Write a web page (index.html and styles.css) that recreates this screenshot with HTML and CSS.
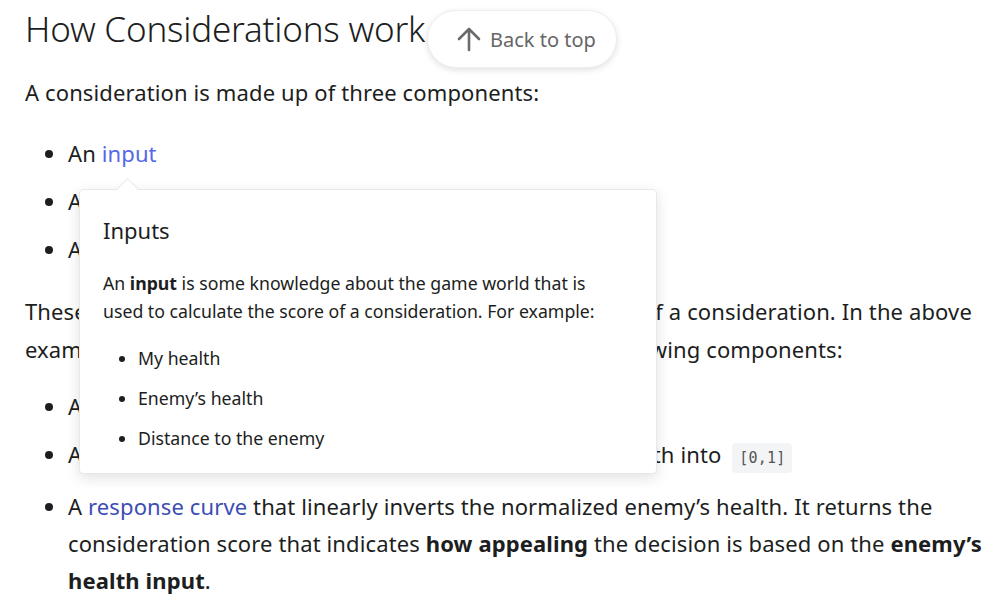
FILE: index.html
```html
<!DOCTYPE html>
<html lang="en">
<head>
<meta charset="utf-8">
<title>How Considerations work</title>
<link rel="stylesheet" href="styles.css">
</head>
<body>
<main class="doc">
  <h2 class="title">How Considerations work</h2>
  <p class="intro">A consideration is made up of three components:</p>
  <ul class="list">
    <li>An <a class="link link-hover" href="#">input</a></li>
    <li>A <a class="link" href="#">normalization</a></li>
    <li>A <a class="link" href="#">response curve</a></li>
  </ul>
  <p class="para">These three components are needed to calculate the score of a consideration. In the above example, the “Attack” consideration is composed of the following components:</p>
  <ul class="list">
    <li>An <a class="link" href="#">input</a> that returns the enemy’s health</li>
    <li>A <a class="link" href="#">normalization</a> that normalizes the enemy’s actual health into <code class="code">[0,1]</code></li>
    <li>A <a class="link" href="#">response curve</a> that linearly inverts the normalized enemy’s health. It returns the consideration score that indicates <strong>how appealing</strong> the decision is based on the <strong>enemy’s health input</strong>.</li>
  </ul>

  <div class="tooltip">
    <div class="tip-title">Inputs</div>
    <p class="tip-text">An <strong>input</strong> is some knowledge about the game world that is used to calculate the score of a consideration. For example:</p>
    <ul class="tip-list">
      <li>My health</li>
      <li>Enemy’s health</li>
      <li>Distance to the enemy</li>
    </ul>
  </div>

  <button class="back-top" type="button">
    <svg class="back-icon" width="26" height="26" viewBox="0 0 26 26" aria-hidden="true">
      <path d="M13 24V3M3 13L13 3L23 13" fill="none" stroke="#6b6b6b" stroke-width="2.6" stroke-linecap="round" stroke-linejoin="round"/>
    </svg>
    <span>Back to top</span>
  </button>
</main>
</body>
</html>
```

FILE: styles.css
```css
html, body {
  margin: 0;
  padding: 0;
  background: #ffffff;
}

body {
  font-family: "Noto Sans", "Open Sans", sans-serif;
  color: #1c1e21;
  font-size: 22px;
  letter-spacing: 0.12px;
  line-height: 37px;
}

.doc {
  position: relative;
  padding: 0 12px 0 25px;
}

.title {
  margin: 0;
  padding-top: 6px;
  font-size: 35px;
  font-weight: 300;
  line-height: 46px;
  letter-spacing: -0.2px;
}

.intro {
  margin: 22px 0 24px;
  line-height: 37px;
}

.para {
  margin: 24px 0 20px;
  line-height: 38px;
}

.list {
  margin: 0;
  padding-left: 43px;
}

.list li {
  margin-bottom: 11px;
}

.link {
  color: #3d4db5;
  text-decoration: none;
}

.link-hover {
  color: #5468e8;
}

.code {
  margin-left: 5px;
  font-family: "DejaVu Sans Mono", monospace;
  font-size: 15px;
  letter-spacing: 0.2px;
  color: #555555;
  background: #f3f4f6;
  border-radius: 4px;
  padding: 6px 7px;
}

strong {
  font-weight: 700;
}

.tooltip {
  position: absolute;
  left: 79px;
  top: 189px;
  width: 578px;
  height: 285px;
  box-sizing: border-box;
  padding: 20px 23px;
  background: #ffffff;
  border: 1px solid #e8e8e8;
  border-radius: 4px;
  box-shadow: 0 4px 14px rgba(0, 0, 0, 0.12);
  color: #1c1e21;
  letter-spacing: 0;
}

.tooltip::before {
  content: "";
  position: absolute;
  left: 40px;
  top: -9px;
  width: 14px;
  height: 14px;
  background: #ffffff;
  border-left: 1px solid #e8e8e8;
  border-top: 1px solid #e8e8e8;
  transform: rotate(45deg);
}

.tip-title {
  font-size: 22px;
  line-height: 40px;
}

.tip-text {
  max-width: 505px;
  margin: 19px 0 19px;
  font-size: 17.7px;
  line-height: 28px;
}

.tip-list {
  margin: 0;
  padding-left: 35px;
  font-size: 17.7px;
  line-height: 28px;
}

.tip-list li {
  margin-bottom: 12px;
}

.back-top {
  position: absolute;
  left: 427px;
  top: 10px;
  width: 190px;
  height: 58px;
  display: flex;
  align-items: center;
  gap: 8px;
  padding: 0 0 0 28px;
  border: 1px solid #eeeeee;
  border-radius: 29px;
  background: #ffffff;
  box-shadow: 0 2px 6px rgba(0, 0, 0, 0.12);
  font-family: "Noto Sans", "Open Sans", sans-serif;
  font-size: 20px;
  color: #666666;
}

.back-icon {
  flex: none;
}
```
